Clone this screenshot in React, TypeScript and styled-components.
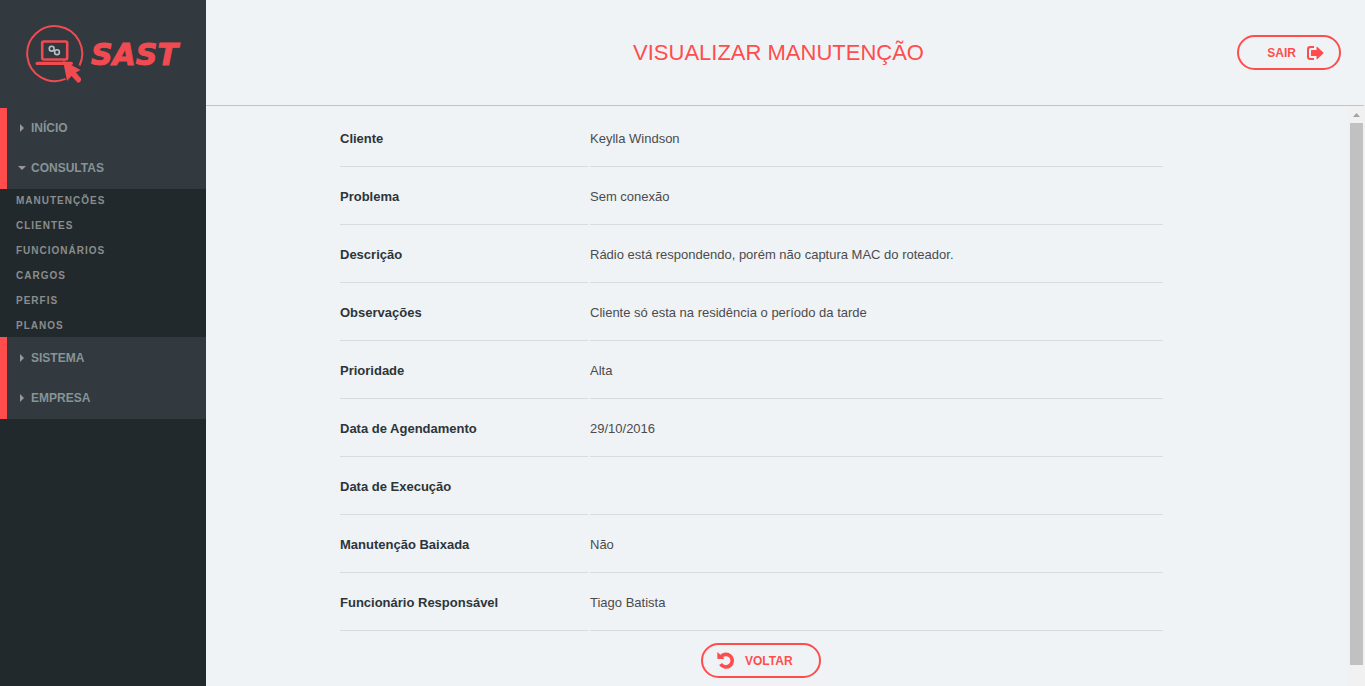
import React from "react";
import styled, { createGlobalStyle } from "styled-components";

const red = "#ff4d4d";

const GlobalStyle = createGlobalStyle`
  * { box-sizing: border-box; }
  body {
    margin: 0;
    background: #eff3f6;
    font-family: "Liberation Sans", Arial, sans-serif;
    font-size: 13px;
    color: #4b4b4d;
  }
`;

const Shell = styled.div`
  display: flex;
  height: 100vh;
  overflow: hidden;
`;

const Sidebar = styled.aside`
  flex: 0 0 206px;
  background: #22292c;
`;

const Brand = styled.a`
  display: flex;
  align-items: center;
  gap: 7px;
  height: 108px;
  padding-left: 25px;
  background: #32393f;
  color: #f14b52;
  text-decoration: none;
`;

const BrandName = styled.span`
  padding-top: 2px;
  font: italic bold 30px/36px "DejaVu Sans", sans-serif;
  -webkit-text-stroke: 1px currentColor;
`;

const MenuGroup = styled.div`
  padding-bottom: 1px;
  border-left: 7px solid ${red};
  background: #32393f;

  nav + & {
    padding-top: 1px;
  }
`;

const MenuButton = styled.button`
  display: flex;
  align-items: center;
  gap: 5px;
  width: 100%;
  height: 40px;
  padding: 0 0 0 10px;
  border: 0;
  background: none;
  color: #869496;
  font: bold 12px/16px "Liberation Sans", Arial, sans-serif;
  text-align: left;
  cursor: pointer;
`;

const Caret = styled.svg`
  width: 9px;
  height: 9px;
  fill: #9a9596;
`;

const SubMenu = styled.nav`
  display: flex;
  flex-direction: column;
  gap: 1px;
  height: 148px;
`;

const SubLink = styled.a`
  padding-left: 16px;
  color: #8b8d8d;
  font-size: 10px;
  font-weight: bold;
  line-height: 24px;
  letter-spacing: 1px;
  text-decoration: none;
`;

const Main = styled.main`
  flex: 1;
  display: flex;
  flex-direction: column;
  min-width: 0;
`;

const Header = styled.header`
  display: grid;
  grid-template-columns: 1fr auto 1fr;
  align-items: center;
  height: 106px;
  margin-right: 1px;
  padding: 0 23px 0 10px;
  border-bottom: 1px solid #bcc6cc;
`;

const Title = styled.h1`
  grid-column: 2;
  margin: 0;
  color: ${red};
  font-size: 22px;
  font-weight: normal;
  line-height: 26px;
`;

const PillButton = styled.button<{ $wide?: boolean }>`
  display: flex;
  align-items: center;
  justify-content: ${(p) => (p.$wide ? "flex-start" : "flex-end")};
  justify-self: end;
  gap: 11px;
  width: ${(p) => (p.$wide ? 120 : 104)}px;
  height: 35px;
  padding: 0 15px 0 14px;
  border: 2px solid ${red};
  border-radius: 18px;
  background: none;
  color: ${red};
  font: bold 12px/16px "Liberation Sans", Arial, sans-serif;
  cursor: pointer;
`;

const Body = styled.div`
  flex: 1;
  display: flex;
  min-height: 0;
`;

const Content = styled.section`
  flex: 1;
  display: flex;
  flex-direction: column;
  align-items: center;
  padding: 3px 183px 0 132px;
`;

const Details = styled.table`
  width: 100%;
  border-spacing: 2px 0;
  table-layout: fixed;
`;

const cell = `
  height: 58px;
  padding: 2px 0 0;
  border-bottom: 1px solid #d9dcde;
  text-align: left;
  line-height: 16px;
`;

const Label = styled.th`
  ${cell}
  width: 248px;
  color: #2d3539;
`;

const Value = styled.td`
  ${cell}
`;

const Actions = styled.div`
  padding: 12px 0 0 19px;
`;

const Scrollbar = styled.div`
  display: flex;
  flex: 0 0 17px;
  flex-direction: column;
  align-items: center;
  padding-bottom: 21px;
  background: #f1f1f1;
`;

const ScrollArrow = styled.svg`
  flex: 0 0 17px;
  width: 17px;
  fill: #a3a3a3;
`;

const Thumb = styled.div`
  flex: 1;
  width: 13px;
  background: #c1c1c1;
`;

const LogoMark = () => (
  <svg width="59" height="60" viewBox="0 0 59 60" fill="none" stroke="currentColor" aria-hidden="true">
    <path d="M40.500 54.900A27.500 27.500 0 1 1 54.500 41.500" strokeWidth="2" />
    <rect x="17.200" y="17.500" width="25" height="18" rx="1.500" strokeWidth="2.600" />
    <path d="M12.200 39.400h34" strokeWidth="3.400" strokeLinecap="round" />
    <g stroke="#b9c3c6" strokeWidth="1.600">
      <circle cx="26.700" cy="24.700" r="2.400" />
      <circle cx="32" cy="28.200" r="2.400" />
    </g>
    <path d="M38 36.500L55.500 46L51 48.600L56 54.500Q56.500 58 53 59L46.500 52L42 57Z" fill="currentColor" stroke="none" />
  </svg>
);

const MenuItem = ({ label, open }: { label: string; open?: boolean }) => (
  <MenuButton type="button" aria-expanded={!!open}>
    <Caret viewBox="0 0 9 9" aria-hidden="true">
      <path d={open ? "M1 2h8L5 6z" : "M3 0l4 4-4 4z"} />
    </Caret>
    {label}
  </MenuButton>
);

const consultas = ["MANUTENÇÕES", "CLIENTES", "FUNCIONÁRIOS", "CARGOS", "PERFIS", "PLANOS"];

const rows: [string, string][] = [
  ["Cliente", "Keylla Windson"],
  ["Problema", "Sem conexão"],
  ["Descrição", "Rádio está respondendo, porém não captura MAC do roteador."],
  ["Observações", "Cliente só esta na residência o período da tarde"],
  ["Prioridade", "Alta"],
  ["Data de Agendamento", "29/10/2016"],
  ["Data de Execução", ""],
  ["Manutenção Baixada", "Não"],
  ["Funcionário Responsável", "Tiago Batista"],
];

export default function App() {
  return (
    <Shell>
      <GlobalStyle />
      <Sidebar>
        <Brand href="#">
          <LogoMark />
          <BrandName>SAST</BrandName>
        </Brand>
        <MenuGroup>
          <MenuItem label="INÍCIO" />
          <MenuItem label="CONSULTAS" open />
        </MenuGroup>
        <SubMenu>
          {consultas.map((c) => (
            <SubLink href="#" key={c}>{c}</SubLink>
          ))}
        </SubMenu>
        <MenuGroup>
          <MenuItem label="SISTEMA" />
          <MenuItem label="EMPRESA" />
        </MenuGroup>
      </Sidebar>
      <Main>
        <Header>
          <Title>VISUALIZAR MANUTENÇÃO</Title>
          <PillButton type="button">
            SAIR
            <svg width="17" height="14" viewBox="0 0 17 14" fill="currentColor" aria-hidden="true">
              <path d="M7 0v2H3.500Q2 2 2 3.500v7Q2 12 3.500 12H7v2H3Q0 14 0 11V3Q0 0 3 0z" />
              <path d="M4 4.500Q4 4 4.500 4H9.500V1.200Q9.700 0.400 10.500 1L16.300 6.500Q16.700 7 16.300 7.500L10.500 13Q9.700 13.600 9.500 12.800V10H4.500Q4 10 4 9.500z" />
            </svg>
          </PillButton>
        </Header>
        <Body>
          <Content>
            <Details>
              <tbody>
                {rows.map(([label, value]) => (
                  <tr key={label}>
                    <Label scope="row">{label}</Label>
                    <Value>{value}</Value>
                  </tr>
                ))}
              </tbody>
            </Details>
            <Actions>
              <PillButton type="button" $wide>
                <svg width="17" height="17" viewBox="0 0 17 17" fill="none" aria-hidden="true">
                  <path d="M3.800 5A6.300 6.300 0 1 1 3.600 12" stroke="currentColor" strokeWidth="3.600" />
                  <path d="M0.300 0.800Q0.300 0 1 0.500L7 6.300Q7.300 7 6.500 7H1Q0.300 7 0.300 6.300z" fill="currentColor" />
                </svg>
                VOLTAR
              </PillButton>
            </Actions>
          </Content>
          <Scrollbar aria-hidden="true">
            <ScrollArrow viewBox="0 0 17 17">
              <path d="M5 11h7L8.500 7z" />
            </ScrollArrow>
            <Thumb />
          </Scrollbar>
        </Body>
      </Main>
    </Shell>
  );
}
